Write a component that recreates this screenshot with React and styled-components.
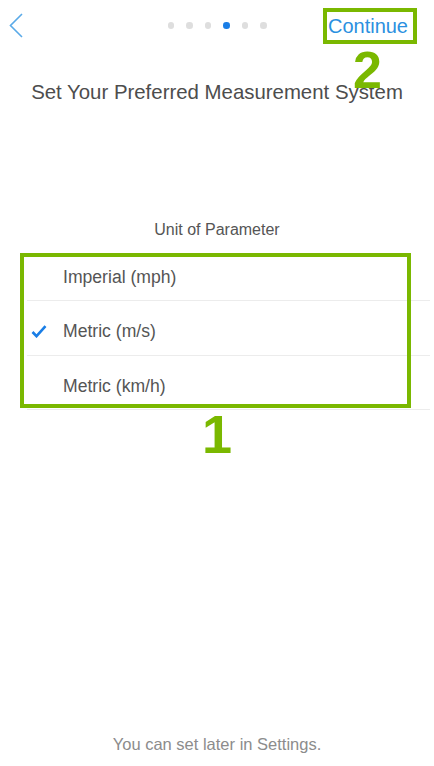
import React, { useState } from 'react';
import styled, { createGlobalStyle } from 'styled-components';

const GlobalStyle = createGlobalStyle`
    html, body {
        margin: 0;
        padding: 0;
        background: #ffffff;
    }
    body {
        font-family: 'Liberation Sans', Arial, sans-serif;
    }
`;

const Page = styled.div`
    min-height: 100vh;
    box-sizing: border-box;
    display: flex;
    flex-direction: column;
    background: #fff;
`;

const Header = styled.div`
    height: 51px;
    display: grid;
    grid-template-columns: 1fr auto 1fr;
    align-items: center;
`;

const BackButton = styled.button`
    justify-self: start;
    margin-left: 9px;
    padding: 0;
    border: none;
    background: none;
    width: 16px;
    height: 26px;
    display: flex;
    align-items: center;
    cursor: pointer;
`;

const Dots = styled.div`
    display: flex;
    gap: 12px;
    align-items: center;
`;

const Dot = styled.span`
    width: 6.5px;
    height: 6.5px;
    border-radius: 50%;
    background: ${(p) => (p.active ? '#1a7ee6' : '#dedede')};
`;

const ContinueWrap = styled.div`
    justify-self: end;
    margin-right: 21px;
    position: relative;
`;

const ContinueButton = styled.button`
    font: 400 20px 'Liberation Sans', Arial, sans-serif;
    line-height: 23px;
    color: #2b90e0;
    background: none;
    border: none;
    padding: 3px 5px 2px 1px;
    outline: 4px solid #7ab800;
    cursor: pointer;
`;

const Marker = styled.span`
    position: absolute;
    font: 700 ${(p) => p.size}px 'Liberation Sans', Arial, sans-serif;
    line-height: 1;
    color: #7ab800;
`;

const Title = styled.h1`
    margin: 30px 0 0;
    font: 400 20.4px 'Liberation Sans', Arial, sans-serif;
    line-height: 23px;
    color: #4d4d4d;
    text-align: center;
`;

const SectionLabel = styled.div`
    margin-top: 117px;
    font: 400 16px 'Liberation Sans', Arial, sans-serif;
    line-height: 18.5px;
    color: #555;
    text-align: center;
`;

const List = styled.div`
    position: relative;
    margin: 7px 4px 0 27px;
`;

const Row = styled.div`
    height: 54.5px;
    box-sizing: border-box;
    padding-top: 8px;
    border-bottom: 1px solid #ececec;
    display: flex;
    align-items: center;
    cursor: pointer;
`;

const CheckSlot = styled.span`
    width: 36px;
    display: flex;
    align-items: center;
    padding-left: 4px;
    box-sizing: border-box;
`;

const RowText = styled.span`
    font: 400 17.6px 'Liberation Sans', Arial, sans-serif;
    color: #555;
`;

const HighlightBox = styled.div`
    position: absolute;
    left: -7px;
    top: 6.5px;
    width: 391px;
    height: 155px;
    box-sizing: border-box;
    border: 4px solid #7ab800;
    pointer-events: none;
`;

const Spacer = styled.div`
    flex: 1;
`;

const Footer = styled.div`
    padding-bottom: 12px;
    font: 400 16.5px 'Liberation Sans', Arial, sans-serif;
    line-height: 19px;
    color: #8c8c8c;
    text-align: center;
`;

const options = ['Imperial (mph)', 'Metric (m/s)', 'Metric (km/h)'];

const App = () => {
    const [selected, setSelected] = useState(1);

    return (
        <>
            <GlobalStyle />
            <Page>
                <Header>
                    <BackButton>
                        <svg width="14" height="25" viewBox="0 0 14 25">
                            <polyline points="13,1 1.5,12.5 13,24" fill="none" stroke="#5aaae8" strokeWidth="1.6" />
                        </svg>
                    </BackButton>
                    <Dots>
                        {[0, 1, 2, 3, 4, 5].map((i) => (
                            <Dot key={i} active={i === 3} />
                        ))}
                    </Dots>
                    <ContinueWrap>
                        <ContinueButton>Continue</ContinueButton>
                        <Marker size={52} style={{ top: 'calc(100% + 4px)', left: '26px' }}>2</Marker>
                    </ContinueWrap>
                </Header>

                <Title>Set Your Preferred Measurement System</Title>

                <SectionLabel>Unit of Parameter</SectionLabel>

                <List>
                    {options.map((opt, i) => (
                        <Row key={opt} onClick={() => setSelected(i)}>
                            <CheckSlot>
                                {selected === i ? (
                                    <svg width="16" height="13" viewBox="0 0 16 13">
                                        <polyline points="1.5,7 5.5,11.2 14.5,1.2" fill="none" stroke="#1a7ee6" strokeWidth="2.6" />
                                    </svg>
                                ) : null}
                            </CheckSlot>
                            <RowText>{opt}</RowText>
                        </Row>
                    ))}
                    <HighlightBox />
                    <Marker size={54} style={{ top: '160.5px', left: '175px' }}>1</Marker>
                </List>

                <Spacer />

                <Footer>You can set later in Settings.</Footer>
            </Page>
        </>
    );
};

export default App;
